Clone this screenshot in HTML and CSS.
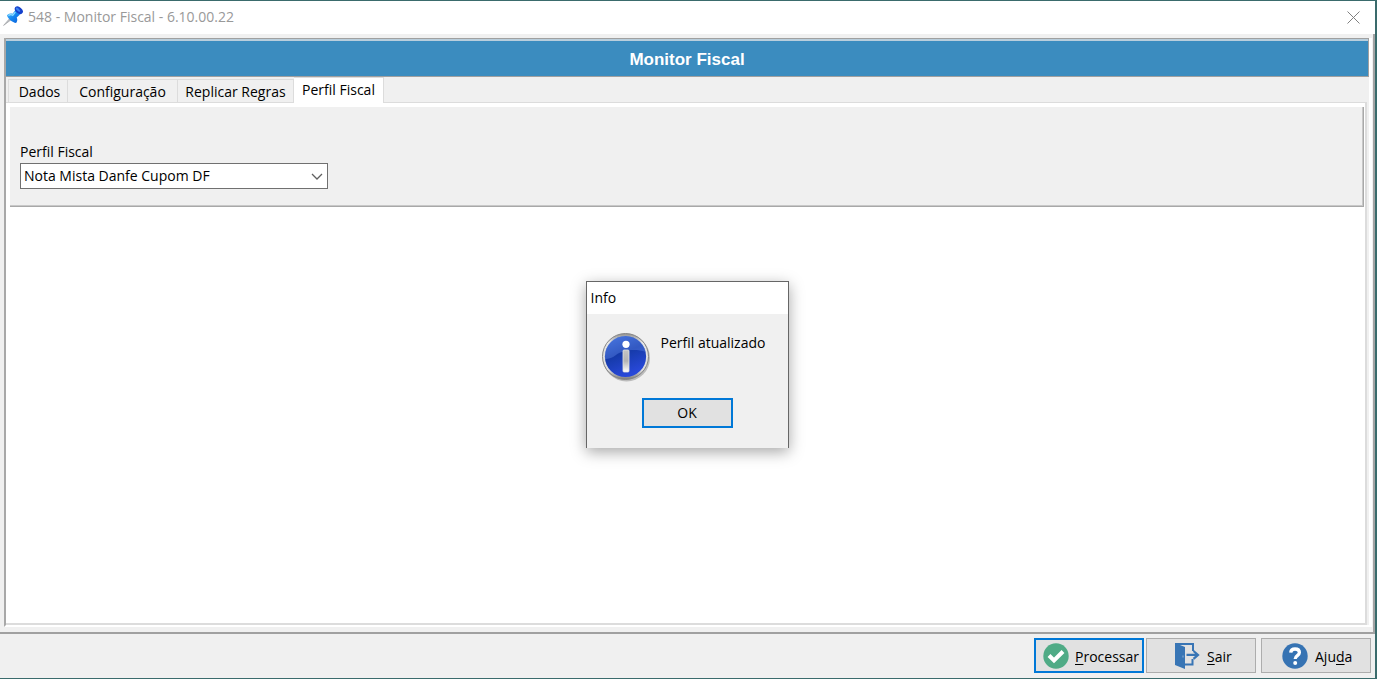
FILE: index.html
```html
<!DOCTYPE html>
<html lang="pt-BR">
<head>
<meta charset="utf-8">
<title>548 - Monitor Fiscal - 6.10.00.22</title>
<link rel="stylesheet" href="styles.css">
</head>
<body>
<div class="window">
  <header class="titlebar">
    <svg class="pin" viewBox="0 0 20 20" aria-hidden="true">
      <defs><linearGradient id="pinBlue" x1="0" y1="0" x2="1" y2="1"><stop offset="0" stop-color="#58c0ff"/><stop offset=".5" stop-color="#1688f0"/><stop offset="1" stop-color="#0a5cd8"/></linearGradient></defs>
      <path d="M.6 19.400 7 12.200l1.400 1.300Z" fill="#b9bcc0" stroke="#a4a7ab" stroke-width=".8"/>
      <path d="M4 9.200c1.600-1.800 3.900-2.200 5.600-1.400L12.400 4l4.600 4.400-3.300 3.200c1 1.900.7 3.900-.6 5.300C9.500 16.500 4.500 12.700 4 9.200Z" fill="url(#pinBlue)"/>
      <path d="M5.400 9.500c1.500-1 3-1 4.300-.2l2.600-3.100" fill="none" stroke="#8fe0ff" stroke-width="1.300"/>
      <ellipse cx="15.800" cy="4.200" rx="4.600" ry="3.100" transform="rotate(42 15.800 4.200)" fill="#1440cc"/>
      <ellipse cx="15" cy="3.600" rx="2.800" ry="1.200" transform="rotate(42 15 3.600)" fill="#3c82f0"/>
    </svg>
    <h1 class="title">548 - Monitor Fiscal - 6.10.00.22</h1>
    <button class="close" type="button" aria-label="Fechar">
      <svg viewBox="0 0 13 13" aria-hidden="true"><path d="M.5.5l12 12M12.500.5l-12 12" stroke="#808080" fill="none"/></svg>
    </button>
  </header>

  <main class="body">
    <div class="frame">
      <h2 class="banner">Monitor Fiscal</h2>
      <nav class="tabs" role="tablist">
        <button class="tab tab-first" type="button" role="tab">Dados</button>
        <button class="tab tab-wide" type="button" role="tab">Configuração</button>
        <button class="tab" type="button" role="tab">Replicar Regras</button>
        <button class="tab tab-active" type="button" role="tab" aria-selected="true">Perfil Fiscal</button>
      </nav>
      <section class="page">
        <div class="group">
          <label class="label" for="perfil">Perfil Fiscal</label>
          <div class="combo">
            <select class="select" id="perfil"><option>Nota Mista Danfe Cupom DF</option></select>
            <svg class="chevron" viewBox="0 0 12 7" aria-hidden="true"><path d="M1 1l5 5 5-5" fill="none" stroke="#606060" stroke-width="1.300"/></svg>
          </div>
        </div>
      </section>
    </div>
  </main>

  <footer class="actions">
    <button class="action action-default" type="button">
      <svg class="action-icon" viewBox="0 0 26 26" aria-hidden="true"><circle cx="13" cy="13" r="12.700" fill="#4fab86"/><path d="M6 12.500l5 5 9-9" fill="none" stroke="#fff" stroke-width="4"/></svg>
      <span><u>P</u>rocessar</span>
    </button>
    <button class="action" type="button">
      <svg class="action-icon" viewBox="0 0 26 26" aria-hidden="true"><path d="M1 0l10 4v22L1 22Z" fill="#3875b5"/><path d="M1 1h18v7M11 21.500h7.500V16" fill="none" stroke="#3875b5" stroke-width="2"/><path d="M12.500 11.900H23M19.500 8l4.500 3.900-4.500 3.900" fill="none" stroke="#3875b5" stroke-width="2.200"/><path d="M9 12.500v2" stroke="#8fb3d8"/></svg>
      <span><u>S</u>air</span>
    </button>
    <button class="action action-help" type="button">
      <svg class="action-icon" viewBox="0 0 26 26" aria-hidden="true"><circle cx="13" cy="13" r="12.700" fill="#3673b3"/><path d="M8.700 9.600C9 7 10.800 6 13 6c2.600 0 4.400 1.400 4.400 3.600 0 3.200-4.200 3-4.200 6.400" fill="none" stroke="#fff" stroke-width="3.300"/><circle cx="13.200" cy="20" r="2" fill="#fff"/></svg>
      <span>Aju<u>d</u>a</span>
    </button>
  </footer>

  <div class="dialog" role="dialog" aria-labelledby="dialog-title">
    <h2 class="dialog-title" id="dialog-title">Info</h2>
    <div class="dialog-body">
      <div class="message">
        <svg class="info" viewBox="0 0 50 50" aria-hidden="true">
          <defs>
            <linearGradient id="rim" x1="0" y1="0" x2="0" y2="1"><stop offset="0" stop-color="#8f8f8f"/><stop offset=".2" stop-color="#e6e6e6"/><stop offset=".8" stop-color="#dcdcdc"/><stop offset="1" stop-color="#777"/></linearGradient>
            <linearGradient id="ball" x1="0" y1="0" x2=".4" y2="1"><stop offset="0" stop-color="#3668d8"/><stop offset=".5" stop-color="#153aa8"/><stop offset="1" stop-color="#2848d8"/></linearGradient>
            <linearGradient id="stem" x1="0" y1="0" x2="0" y2="1"><stop offset="0" stop-color="#c4c4c4"/><stop offset=".5" stop-color="#b4b4b4"/><stop offset="1" stop-color="#fff"/></linearGradient>
          </defs>
          <circle cx="25.500" cy="26" r="23.500" fill="#999" opacity=".6"/>
          <circle cx="24.500" cy="24.500" r="23" fill="url(#rim)" stroke="#858585"/>
          <circle cx="24.500" cy="24.500" r="20.600" fill="url(#ball)"/>
          <path d="M4 27C3 13 13 4 24.500 4 35 4 43 11 44.800 20 33 16 20 19 15 23 12 25.500 8 27 4 27Z" fill="#6d96f4" opacity=".35"/>
          <circle cx="25" cy="12.300" r="3.600" fill="#fff"/>
          <rect x="22" y="18" width="6" height="22" rx="1" fill="url(#stem)" stroke="#e2e2e2" stroke-width=".8"/>
        </svg>
        <p class="message-text">Perfil atualizado</p>
      </div>
      <button class="ok" type="button">OK</button>
    </div>
  </div>
</div>
</body>
</html>
```
FILE: styles.css
```css
* { box-sizing: border-box; }
html, body { height: 100%; }
body { margin: 0; font-family: "Open Sans", "Noto Sans", sans-serif; font-size: 14px; color: #000; }
h1, h2, p { margin: 0; font-weight: 400; }
button, select { font: inherit; color: inherit; margin: 0; border-radius: 0; }
svg { display: block; flex: none; }

.window { position: relative; display: flex; flex-direction: column; min-height: 100%; background: #f0f0f0; border: solid #3a6b6c; border-width: 1px 2px 1px 0; }

.titlebar { display: flex; align-items: center; height: 33px; padding: 0 13px 0 3px; background: #fff; }
.pin { width: 20px; height: 20px; align-self: flex-start; margin-top: 5px; }
.title { flex: 1; margin-left: 5px; padding-bottom: 2px; font-size: 14px; line-height: 20px; color: #999; }
.close { padding: 2px; border: 0; background: none; }
.close svg { width: 13px; height: 13px; }

.body { flex: 1; display: flex; padding: 4px 1px 5px 4px; border-right: 2px solid #a4a4a4; border-bottom: 2px solid #a0a0a0; }
.frame { flex: 1; display: flex; flex-direction: column; border-left: 2px solid #a8a8a8; border-bottom: 2px solid #fff; border-right: 3px solid #fff; }
.banner { height: 39px; border: solid #a0a0a0; border-width: 1px 1px 1px 0; box-shadow: inset 0 2px 0 #b9cedc; background: #3b8cbf; color: #fff; font-family: "Liberation Sans", Arial, sans-serif; font-weight: 700; font-size: 17px; line-height: 41px; text-align: center; }

.tabs { display: flex; align-items: flex-end; height: 25px; padding-left: 2px; }
.tab { width: 116px; height: 23px; padding: 1px 0 0; border: 1px solid #dcdcdc; border-width: 1px 1px 0 0; background: #f0f0f0; line-height: 22px; text-align: center; white-space: nowrap; }
.tab-first { width: 60px; padding-left: 3px; border-left-width: 1px; }
.tab-wide { width: 110px; }
.tab-active { position: relative; width: 90px; height: 26px; margin-bottom: -1px; padding: 0 0 2px; background: #fff; }

.page { flex: 1; margin-right: 2px; padding: 4px 1px 2px 4px; background: #fff; border: solid #dcdcdc; border-width: 1px 2px 2px 0; }
.group { height: 100px; padding: 36px 10px 0; background: #f0f0f0; border: solid #a8a8a8; border-width: 0 1px 1px 0; box-shadow: inset -1px -1px 0 #c8c8c8; }
.label { display: block; line-height: 18px; }
.combo { display: grid; width: 308px; margin-top: 2px; align-items: center; }
.select { grid-area: 1 / 1; width: 100%; height: 26px; padding: 0 24px 2px 3px; border: 1px solid #707070; background: #fff; appearance: none; }
.chevron { grid-area: 1 / 1; justify-self: end; width: 12px; height: 7px; margin-right: 5px; pointer-events: none; }

.actions { display: flex; justify-content: flex-end; gap: 2px; padding: 4px 4px 5px; }
.action { display: flex; align-items: center; justify-content: flex-start; gap: 7px; width: 110px; height: 35px; padding: 2px 4px 2px 27px; border: 1px solid #adadad; background: #e1e1e1; }
.action-default { gap: 6px; padding: 0 2px 0 7px; border: 2px solid #0078d7; }
.action-help { margin-left: 3px; padding-left: 20px; }
.action-icon { width: 26px; height: 26px; }
.action span { padding-top: 2px; }
u { text-underline-offset: 2px; }

.dialog { position: absolute; left: 50%; top: 280px; width: 203px; margin-left: -102px; background: #f0f0f0; border: 1px solid #666; border-bottom: 0; box-shadow: 0 4px 14px rgba(0, 0, 0, .35); }
.dialog-title { height: 32px; padding-left: 4px; background: #fff; font-size: 14px; line-height: 32px; }
.dialog-body { display: flex; flex-direction: column; align-items: center; padding: 18px 14px 20px; }
.message { display: flex; align-self: stretch; gap: 10px; }
.info { width: 50px; height: 50px; }
.message-text { line-height: 22px; white-space: nowrap; }
.ok { width: 91px; height: 30px; margin-top: 16px; padding: 0 0 2px; border: 2px solid #0078d7; background: #e1e1e1; }
```
